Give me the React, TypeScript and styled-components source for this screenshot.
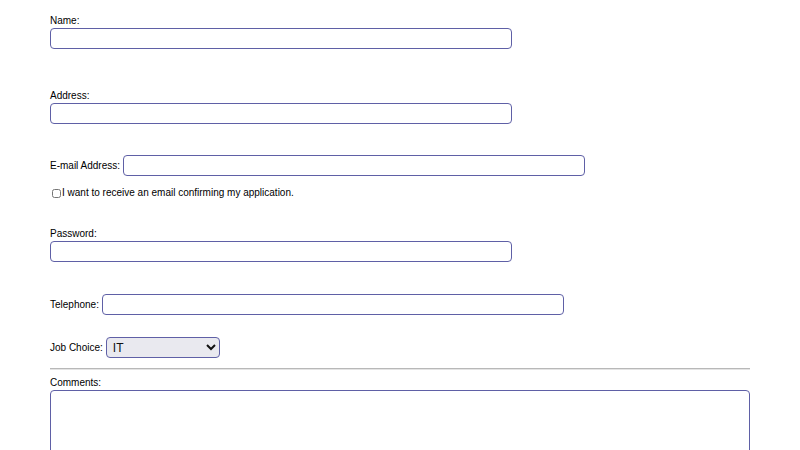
import styled, { createGlobalStyle } from 'styled-components';

const GlobalStyle = createGlobalStyle`
    html, body {
        margin: 0;
        padding: 0;
        background: #ffffff;
    }
    body {
        font-family: 'Liberation Sans', Arial, sans-serif;
        font-size: 10px;
        color: #000000;
    }
`;

const Form = styled.form`
    display: flex;
    flex-direction: column;
    width: 700px;
    padding: 14px 0 0 50px;
`;

const Field = styled.div<{ $top?: number }>`
    display: flex;
    flex-direction: column;
    margin-top: ${({ $top }) => $top ?? 0}px;
`;

const InlineField = styled.div<{ $top?: number }>`
    display: flex;
    align-items: center;
    gap: 3px;
    margin-top: ${({ $top }) => $top ?? 0}px;
`;

const Label = styled.label`
    display: block;
    line-height: 14px;
    font-size: 10px;
    white-space: nowrap;
`;

const TextInput = styled.input<{ $width?: number }>`
    box-sizing: border-box;
    width: ${({ $width }) => $width ?? 462}px;
    height: 21px;
    margin: 0;
    padding: 2px 4px;
    border: 1px solid #5f60a6;
    border-radius: 4px;
    background: #ffffff;
    font-family: 'Liberation Sans', Arial, sans-serif;
    font-size: 11px;
    outline: none;
`;

const CheckRow = styled.label`
    display: flex;
    align-items: center;
    height: 12px;
    margin-top: 11px;
    line-height: 12px;
    font-size: 10px;
`;

const Check = styled.input`
    width: 9px;
    height: 9px;
    margin: 0 1px 0 2px;
`;

const Select = styled.select`
    box-sizing: border-box;
    width: 114px;
    height: 21px;
    margin: 0;
    padding: 0 2px;
    border: 1px solid #5f60a6;
    border-radius: 4px;
    background-color: #e9e9ef;
    font-family: 'Liberation Sans', Arial, sans-serif;
    font-size: 12px;
    color: #111111;
`;

const Rule = styled.hr`
    width: 700px;
    margin: 10px 0 0 0;
    border: none;
    border-top: 1px solid #b8b8b8;
    border-bottom: 1px solid #e4e4e4;
`;

const TextArea = styled.textarea`
    box-sizing: border-box;
    width: 700px;
    height: 110px;
    margin: 0;
    padding: 4px;
    border: 1px solid #5f60a6;
    border-radius: 4px;
    resize: none;
    font-family: 'Liberation Sans', Arial, sans-serif;
    font-size: 11px;
`;

export default function App() {
    return (
        <>
            <GlobalStyle />
            <Form onSubmit={(e) => e.preventDefault()}>
                <Field>
                    <Label htmlFor="name">Name:</Label>
                    <TextInput id="name" type="text" />
                </Field>

                <Field $top={40}>
                    <Label htmlFor="address">Address:</Label>
                    <TextInput id="address" type="text" />
                </Field>

                <InlineField $top={31}>
                    <Label htmlFor="email">E-mail Address:</Label>
                    <TextInput id="email" type="email" />
                </InlineField>

                <CheckRow>
                    <Check type="checkbox" />I want to receive an email confirming my application.
                </CheckRow>

                <Field $top={28}>
                    <Label htmlFor="password">Password:</Label>
                    <TextInput id="password" type="password" />
                </Field>

                <InlineField $top={32}>
                    <Label htmlFor="phone">Telephone:</Label>
                    <TextInput id="phone" type="tel" />
                </InlineField>

                <InlineField $top={22}>
                    <Label htmlFor="job">Job Choice:</Label>
                    <Select id="job" defaultValue="IT">
                        <option value="IT">IT</option>
                        <option value="HR">HR</option>
                        <option value="Sales">Sales</option>
                    </Select>
                </InlineField>

                <Rule />

                <Field $top={6}>
                    <Label htmlFor="comments">Comments:</Label>
                    <TextArea id="comments" />
                </Field>
            </Form>
        </>
    );
}
